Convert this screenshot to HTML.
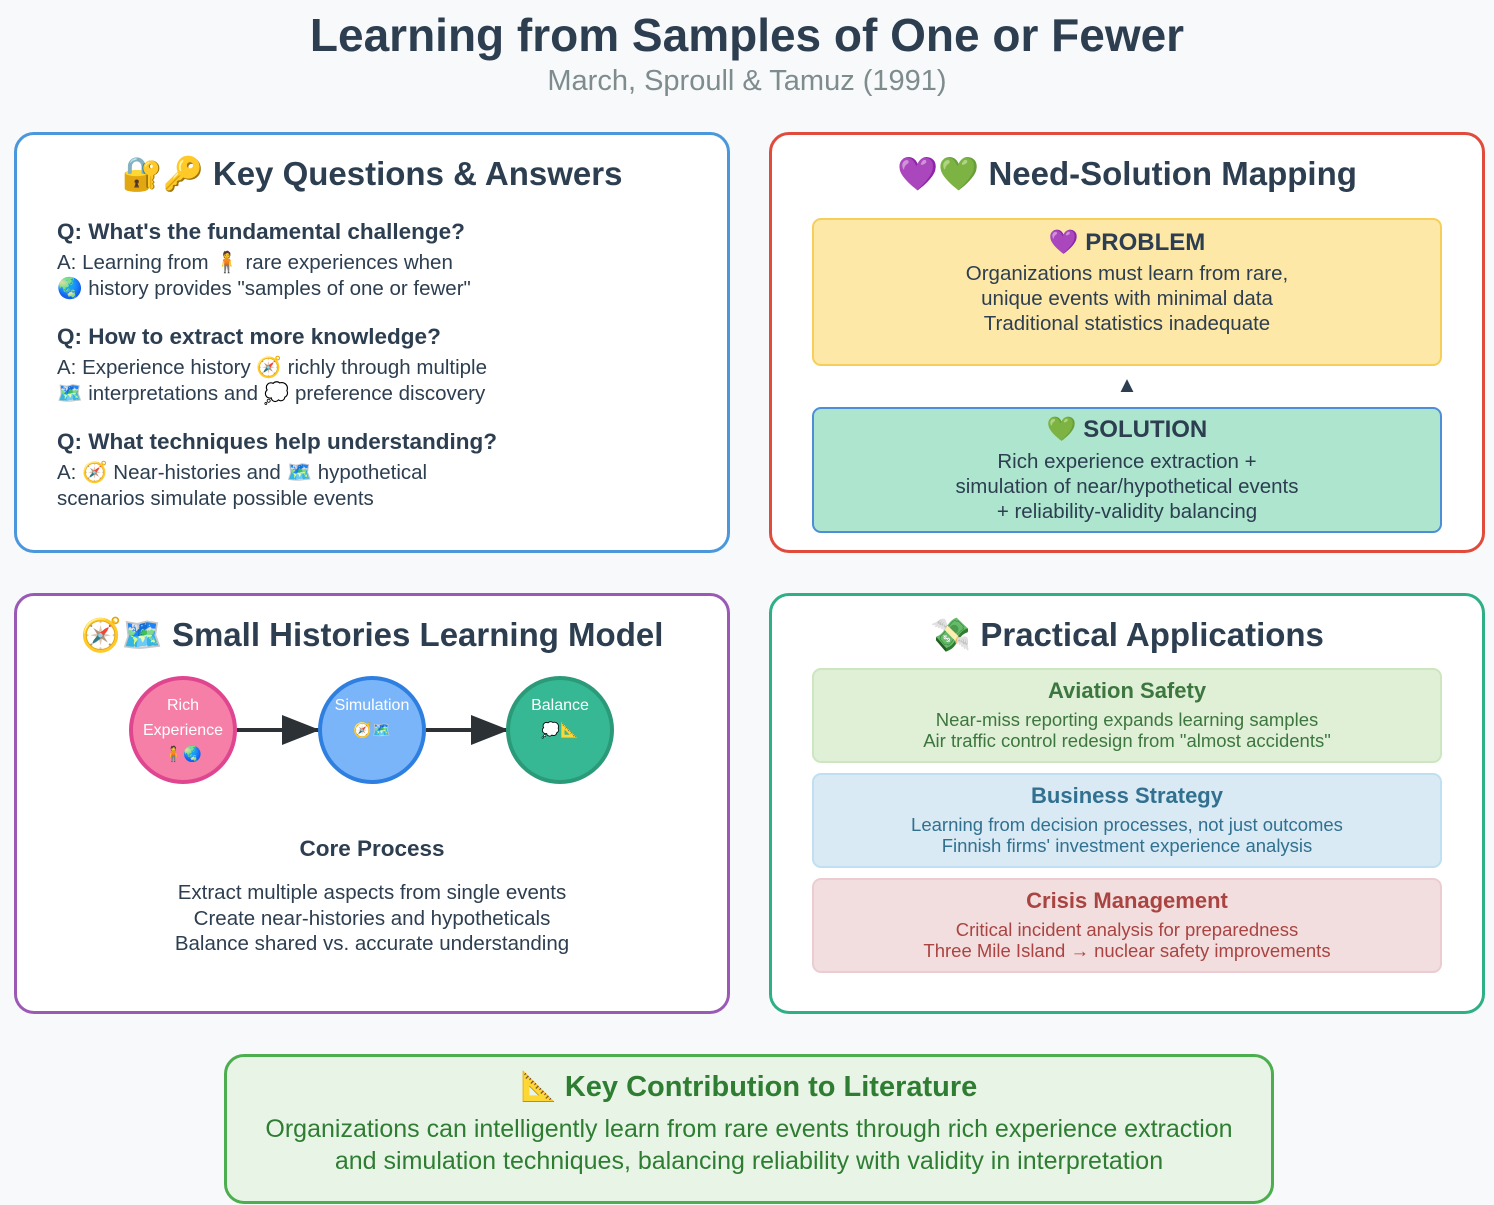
<!DOCTYPE html>
<html><head><meta charset="utf-8"><style>
*{margin:0;padding:0;box-sizing:border-box}
body{width:1494px;height:1205px;background:#f7f9fa;font-family:"Liberation Sans","Noto Sans CJK JP",sans-serif;color:#2c3e50;position:relative;overflow:hidden}
.abs{position:absolute}
h1{position:absolute;left:0;width:1494px;top:8px;text-align:center;font-size:46px;font-weight:bold;color:#2c3e50}
.sub{position:absolute;left:0;width:1494px;top:65px;text-align:center;font-size:29px;color:#7f8c8d}
.panel{position:absolute;background:#fff;border:3.5px solid;border-radius:20px}
.ph{position:absolute;left:0;right:0;text-align:center;font-size:33px;font-weight:bold;top:20px}
.q{position:absolute;left:40px;font-size:22.5px;font-weight:bold;white-space:nowrap}
.a{position:absolute;left:40px;font-size:20.5px;line-height:25.5px;white-space:nowrap}
.box{position:absolute;left:40px;width:630px;border:2px solid;border-radius:9px;text-align:center}
.c{text-align:center;position:absolute;left:0;right:0}
</style></head><body>
<h1>Learning from Samples of One or Fewer</h1>
<div class="sub">March, Sproull &amp; Tamuz (1991)</div>

<div class="panel" style="left:14px;top:132px;width:716px;height:421px;border-color:#4a98db">
 <div class="ph">🔐🔑 Key Questions &amp; Answers</div>
 <div class="q" style="top:84px">Q: What's the fundamental challenge?</div>
 <div class="a" style="top:115px">A: Learning from 🧍 rare experiences when<br>🌏 history provides "samples of one or fewer"</div>
 <div class="q" style="top:189px">Q: How to extract more knowledge?</div>
 <div class="a" style="top:220px">A: Experience history 🧭 richly through multiple<br>🗺️ interpretations and 💭 preference discovery</div>
 <div class="q" style="top:294px">Q: What techniques help understanding?</div>
 <div class="a" style="top:325px">A: 🧭 Near-histories and 🗺️ hypothetical<br>scenarios simulate possible events</div>
</div>

<div class="panel" style="left:769px;top:132px;width:716px;height:421px;border-color:#e04b3c">
 <div class="ph">💜💚 Need-Solution Mapping</div>
 <div class="box" style="top:83px;height:148px;background:#fde8a8;border-color:#f5cf5a">
  <div style="font-size:24px;font-weight:bold;margin-top:8px">💜 PROBLEM</div>
  <div style="font-size:20.5px;line-height:25px;margin-top:4px">Organizations must learn from rare,<br>unique events with minimal data<br>Traditional statistics inadequate</div>
 </div>
 <div class="c" style="top:237px;font-size:22px">▲</div>
 <div class="box" style="top:272px;height:126px;background:#ade5cf;border-color:#4e8ed8">
  <div style="font-size:24px;font-weight:bold;margin-top:6px">💚 SOLUTION</div>
  <div style="font-size:20.5px;line-height:25px;margin-top:5px">Rich experience extraction +<br>simulation of near/hypothetical events<br>+ reliability-validity balancing</div>
 </div>
</div>

<div class="panel" style="left:14px;top:593px;width:716px;height:421px;border-color:#9b59b6">
 <div class="ph">🧭🗺️ Small Histories Learning Model</div>
 <svg class="abs" style="left:-3.5px;top:-3.5px" width="716" height="421">
  <line x1="223" y1="137" x2="306" y2="137" stroke="#2c3136" stroke-width="4"/>
  <path d="M268,122 L306,137 L268,152z" fill="#2c3136"/>
  <line x1="412" y1="137" x2="495" y2="137" stroke="#2c3136" stroke-width="4"/>
  <path d="M457,122 L495,137 L457,152z" fill="#2c3136"/>
  <circle cx="169" cy="137" r="52" fill="#f67fa8" stroke="#e0468f" stroke-width="4"/>
  <circle cx="358" cy="137" r="52" fill="#7ab5fa" stroke="#2f7fe0" stroke-width="4"/>
  <circle cx="546" cy="137" r="52" fill="#35b893" stroke="#2b9a78" stroke-width="4"/>
  <g font-family="Liberation Sans, sans-serif" font-size="16" fill="#fff" text-anchor="middle">
   <text x="169" y="117">Rich</text><text x="169" y="142">Experience</text><text x="169" y="166" font-size="15">🧍🌏</text>
   <text x="358" y="117">Simulation</text><text x="358" y="142" font-size="15">🧭🗺️</text>
   <text x="546" y="117">Balance</text><text x="546" y="142" font-size="15">💭📐</text>
  </g>
 </svg>
 <div class="c" style="top:240px;font-size:22.5px;font-weight:bold">Core Process</div>
 <div class="c" style="top:284px;font-size:20.5px;line-height:25.5px">Extract multiple aspects from single events<br>Create near-histories and hypotheticals<br>Balance shared vs. accurate understanding</div>
</div>

<div class="panel" style="left:769px;top:593px;width:716px;height:421px;border-color:#2eaf85">
 <div class="ph">💸 Practical Applications</div>
 <div class="box" style="top:72px;height:95px;background:#dff0d7;border-color:#cce6bf;color:#3d763e">
  <div style="font-size:22px;font-weight:bold;margin-top:8px">Aviation Safety</div>
  <div style="font-size:18.5px;line-height:21px;margin-top:5px">Near-miss reporting expands learning samples<br>Air traffic control redesign from "almost accidents"</div>
 </div>
 <div class="box" style="top:177px;height:95px;background:#d9eaf5;border-color:#bfe0f0;color:#31708f">
  <div style="font-size:22px;font-weight:bold;margin-top:8px">Business Strategy</div>
  <div style="font-size:18.5px;line-height:21px;margin-top:5px">Learning from decision processes, not just outcomes<br>Finnish firms' investment experience analysis</div>
 </div>
 <div class="box" style="top:282px;height:95px;background:#f2dede;border-color:#ebcdd1;color:#a94442">
  <div style="font-size:22px;font-weight:bold;margin-top:8px">Crisis Management</div>
  <div style="font-size:18.5px;line-height:21px;margin-top:5px">Critical incident analysis for preparedness<br>Three Mile Island → nuclear safety improvements</div>
 </div>
</div>

<div class="panel" style="left:224px;top:1054px;width:1050px;height:150px;background:#e8f5e6;border-color:#4cae4f;color:#2e7d32;text-align:center">
 <div style="font-size:29px;font-weight:bold;margin-top:13px">📐 Key Contribution to Literature</div>
 <div style="font-size:25px;line-height:32px;margin-top:9px">Organizations can intelligently learn from rare events through rich experience extraction<br>and simulation techniques, balancing reliability with validity in interpretation</div>
</div>
</body></html>
